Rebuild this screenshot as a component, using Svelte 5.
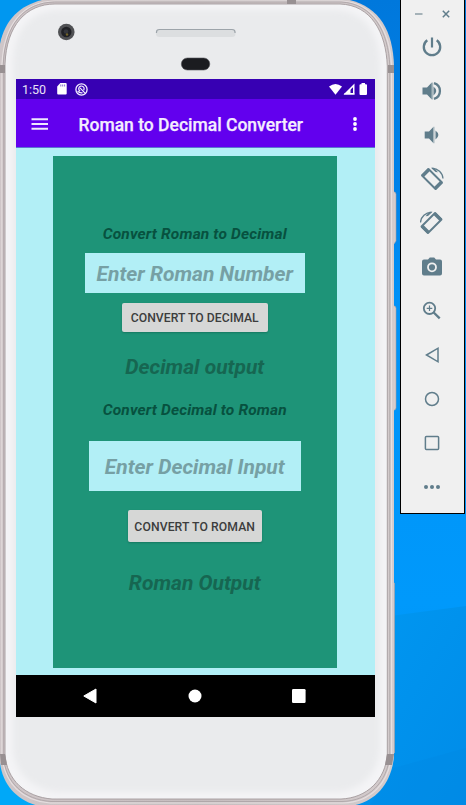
<script>
  const tools = ['power', 'louder', 'quieter', 'rotateLeft', 'rotateRight', 'camera', 'zoom', 'back', 'home', 'overview', 'more'];
</script>

<main class="desktop">
  <svg class="wallpaper" width="466" height="805" viewBox="0 0 466 805" aria-hidden="true">
    <defs>
      <linearGradient id="sky" x1="0" y1="0" x2="0" y2="1">
        <stop offset="0" stop-color="#0078dc" />
        <stop offset=".22" stop-color="#0081e8" />
        <stop offset=".38" stop-color="#0092f8" />
        <stop offset=".75" stop-color="#0099fb" />
        <stop offset="1" stop-color="#008ee9" />
      </linearGradient>
      <linearGradient id="ray" x1="0" y1="0" x2="1" y2="1">
        <stop offset="0" stop-color="#0098f2" />
        <stop offset="1" stop-color="#008ce8" />
      </linearGradient>
      <linearGradient id="metal" x1="0" y1="0" x2="1" y2="0">
        <stop offset="0" stop-color="#cfc6c8" />
        <stop offset=".5" stop-color="#c6bdbf" />
        <stop offset="1" stop-color="#d3cbcc" />
      </linearGradient>
      <filter id="soft" x="-5%" y="-5%" width="110%" height="110%"><feGaussianBlur stdDeviation="3" /></filter>
    </defs>
    <rect width="466" height="805" fill="url(#sky)" />
    <path d="M0 0h60v60H0z" fill="#0097f0" />
    <path d="M0 740h60v65H0z" fill="#00a8f8" />
    <path d="M390 616L466 606V805H340V780z" fill="url(#ray)" />
    <path d="M394 768L466 748V805H370z" fill="#0088e2" opacity=".3" />
    <path d="M393 192h2l1 2v47l-2 3h-1zM393 306h2l1 2v100l-1 2h-2zM393 583h1.500v170H393z" fill="#d6cdce" stroke="#aaa0a3" stroke-width=".6" />
    <path d="M0 44C5 18 23 3 47-1H345C378 5 393 29 394 66V757C391 785 374 803 350 806H39C18 801 3 786 0 763z" fill="url(#metal)" />
    <path d="M2 64C4 24 23 2 54 1H342C374 3 390 31 391.500 66V755C389 783 371 802 343 803H50C23 801 4 784 2 755z" fill="none" stroke="#e6dfe0" stroke-width="1.200" />
    <path d="M3.300 64C5 24.500 24 2.500 54.500 2H341C373 3.500 388.500 32 389.800 66V755C387.500 782 369 801 342 801.500H51C24 799.500 5 783 3.300 755z" fill="none" stroke="#aaa1a3" stroke-width=".8" />
    <path d="M5 64C6.500 25.500 26 4 55 4H340C371 5 386 32 387.300 66V754C385.500 780 367 798 341 799H52C25.500 797 6.500 780 5 754z" fill="#f4f4f6" stroke="#a39a9c" stroke-width=".9" />
    <path d="M13 65C13 30 30 10 60 10H336C366 11 380 36 380 65V750C378 773 361 791 336 792H60C34 791 15 774 13 750z" fill="#eaebed" filter="url(#soft)" />
    <path d="M0 65h5v8H0zM388 65h6v8h-6zM287 0h9v4h-9zM0 754h5l2 11H1zM387 754h7l-2 11h-7z" fill="#989092" />
    <circle cx="66.300" cy="32" r="8.300" fill="#505154" />
    <circle cx="66.300" cy="32" r="5.200" fill="#202125" />
    <circle cx="66" cy="31.500" r="2.300" fill="#34363c" />
    <circle cx="67" cy="34.500" r="1.200" fill="#716228" />
    <rect x="156" y="29" width="79.500" height="8" rx="3.500" fill="#dcdee0" />
    <path d="M156.500 33v-1q0-2.500 3-2.500H232q3 0 3 2.500v1" fill="none" stroke="#9da4aa" stroke-width="1.200" />
    <rect x="181.300" y="58" width="28.500" height="12" rx="6" fill="#1b1c20" stroke="#55565a" stroke-width=".6" />
  </svg>

  <section class="screen">
    <div class="status">
      <span>1:50</span>
      <svg class="sd" width="10" height="12" viewBox="0 0 10 12"><path d="M3.300 0H8.700Q9.700 0 9.700 1V10.600Q9.700 11.600 8.700 11.600H1.200Q.2 11.600 .2 10.600V3.500z" fill="#fff" /><path d="M3.800 1.500v2M5.700 1.500v2M7.600 1.500v2" stroke="#6b4dc4" stroke-width=".8" /></svg>
      <svg class="ring" width="13" height="13" viewBox="0 0 13 13" fill="none" stroke="#f4f0ff"><circle cx="6.500" cy="6.500" r="5.600" stroke-width="1.300" /><path d="M8.600 7.300A2.700 2.700 0 1 0 5.200 8.100" stroke-width="1.200" /><path d="M5 4.800L9.800 9.800M2.600 8.200Q5 10.300 7.500 9.600" stroke-width="1.200" /></svg>
      <svg class="signals" width="40" height="13" viewBox="0 0 40 13" fill="#fff"><path d="M0 3.500Q6.500-1.500 13 3.500L6.500 11.700z" /><path d="M25.500.5V11.500H14.500z" /><path d="M24 4.200V10h-4.800v-1.300z" fill="#3700b3" /><path d="M15 11h10.500" stroke="#fff" /><path d="M18.500 8.200L21.500 5.200V11h-3z" fill="#fff" /><path d="M32.500 1.200V0h3.500v1.200h1q1 0 1 1V11q0 1-1 1h-5.500q-1 0-1-1V2.200q0-1 1-1z" /></svg>
    </div>
    <header>
      <svg width="18" height="12" viewBox="0 0 18 12"><path d="M.5 1.200h16.500M.5 6h16.500M.5 10.700h16.500" stroke="#eee8ff" stroke-width="1.900" /></svg>
      <h1>Roman to Decimal Converter</h1>
      <svg class="dots" width="6" height="16" viewBox="0 0 6 16" fill="#fff"><circle cx="3" cy="3" r="1.900" /><circle cx="3" cy="8" r="1.900" /><circle cx="3" cy="13" r="1.900" /></svg>
    </header>
    <div class="content">
      <div class="card">
        <div class="label first"><span>Convert Roman to Decimal</span></div>
        <div class="field roman"><span>Enter Roman Number</span></div>
        <button class="to-decimal"><span>CONVERT TO DECIMAL</span></button>
        <div class="result"><span>Decimal output</span></div>
        <div class="label second"><span>Convert Decimal to Roman</span></div>
        <div class="field decimal"><span>Enter Decimal Input</span></div>
        <button class="to-roman"><span>CONVERT TO ROMAN</span></button>
        <div class="result last"><span>Roman Output</span></div>
      </div>
    </div>
    <nav>
      <svg width="14" height="16" viewBox="0 0 14 16"><path d="M.8 8L13 1V15z" fill="#fff" stroke="#fff" stroke-linejoin="round" /></svg>
      <svg width="14" height="14" viewBox="0 0 14 14"><circle cx="7" cy="7" r="6.500" fill="#fff" /></svg>
      <svg width="14" height="14" viewBox="0 0 14 14"><rect width="13.600" height="14" rx="1.300" fill="#fff" /></svg>
    </nav>
  </section>

  <aside>
    <div class="window-actions">
      <svg width="8" height="8" viewBox="0 0 8 8"><path d="M0 4h7.500" stroke="#9cabb2" stroke-width="1.800" /></svg>
      <svg width="8" height="8" viewBox="0 0 8 8"><path d="M.8.8L7.200 7.200M7.200.8L.8 7.200" stroke="#607d8b" stroke-width="1.500" /></svg>
    </div>
    {#each tools as tool}
      <div class="tool">
        <svg width="24" height="24" viewBox="0 0 24 24" fill="none" stroke="#607d8b" stroke-width="2">
          {#if tool === 'power'}
            <path d="M12 2.500V12.500" stroke-width="2.200" /><path d="M7.300 5.300A8.200 8.200 0 1 0 16.700 5.300" stroke-width="2.300" />
          {:else if tool === 'louder'}
            <path d="M2.500 8.500h4.500l4.800-5v17l-4.800-5H2.500z" fill="#607d8b" stroke="none" /><path d="M11.800 3.500h1.400v17h-1.400z" fill="#a8b8be" stroke="none" /><path d="M13.500 7.500Q19 12 13.500 16.500z" fill="#607d8b" stroke="none" /><path d="M14 4.200A8.100 8.100 0 0 1 14 19.800" stroke-width="2.300" />
          {:else if tool === 'quieter'}
            <path d="M4.700 8.500h4.300l4.500-4.700v16.400L9 15.500H4.700z" fill="#607d8b" stroke="none" /><path d="M13.500 3.800h1v16.400h-1z" fill="#a8b8be" stroke="none" /><path d="M15.500 7.500Q21.300 12 15.500 16.500z" fill="#607d8b" stroke="none" />
          {:else if tool === 'rotateLeft' || tool === 'rotateRight'}
            <g transform={tool === 'rotateRight' ? 'translate(23.5 0) scale(-1 1)' : ''}>
              <path d="M2 8.500L8.500 2L22 15.500L15.500 22z" stroke-width="1.900" stroke-linejoin="round" />
              <path d="M2.500 9L9 2.500M15 21.500L21.500 15" stroke-width="3.300" />
              <path d="M12 1.300A10.800 10.800 0 0 1 23 11.500" stroke-width="1.300" /><path d="M11 .8L14 .8L18 5.300L15.500 5z" fill="#607d8b" stroke="none" />
            </g>
          {:else if tool === 'camera'}
            <path d="M4 4.500h4L9.800 2.500h4.400L16 4.500h4q2 0 2 2v12q0 2-2 2H4q-2 0-2-2v-12q0-2 2-2z" fill="#607d8b" stroke="none" /><circle cx="12" cy="12.300" r="4" stroke="#f0f0f0" stroke-width="1.800" />
          {:else if tool === 'zoom'}
            <circle cx="9.500" cy="9.300" r="5.700" stroke-width="1.800" /><path d="M9.500 6.500v5.600M6.700 9.300h5.600" stroke-width="1.200" /><path d="M13.700 13.500L19.700 19.300" stroke-width="2.300" />
          {:else if tool === 'back'}
            <path d="M6.500 12L18 5.200V18.800z" stroke-width="1.500" />
          {:else if tool === 'home'}
            <circle cx="12" cy="12" r="6.500" stroke-width="1.500" />
          {:else if tool === 'overview'}
            <rect x="5.400" y="5.400" width="13.200" height="13.200" rx="1" stroke-width="1.500" />
          {:else}
            <g fill="#607d8b" stroke="none"><circle cx="6" cy="12" r="2" /><circle cx="12" cy="12" r="2" /><circle cx="18" cy="12" r="2" /></g>
          {/if}
        </svg>
      </div>
    {/each}
  </aside>
</main>

<style>
  :global(body) { overflow: hidden; }
  .desktop { position: relative; box-sizing: border-box; width: 466px; height: 805px; overflow: hidden; padding-left: 16px; display: flex; align-items: flex-start; font-family: Roboto, sans-serif; }
  .wallpaper { position: absolute; left: 0; top: 0; }
  .screen { position: relative; width: 359px; height: 638px; margin-top: 79px; display: flex; flex-direction: column; flex: none; }
  .status { box-sizing: border-box; height: 20px; background: #3700b3; color: #e9e2f7; display: flex; align-items: center; padding: 0 6px; font-size: 12.500px; }
  .status span { width: 35px; padding-top: 1px; }
  .sd { margin-right: 8px; }
  .signals { margin-left: auto; }
  header { box-sizing: border-box; height: 49px; background: #6200ee; display: flex; align-items: center; padding: 1px 17px 0 15px; border-bottom: 1px solid #5a78ce; }
  h1 { margin: 0 0 0 29.500px; color: #f4edff; font-size: 17.500px; font-weight: 500; white-space: nowrap; padding-top: 2px; -webkit-text-stroke: .25px #f4edff; }
  .dots { margin-left: auto; }
  .content { box-sizing: border-box; height: 527px; background: #b2eff6; padding: 7.500px 38px 0 36.500px; }
  .card { box-sizing: border-box; height: 512px; background: #1e9478; display: flex; flex-direction: column; align-items: center; padding-top: 69px; }
  .label, .field, .result { font-style: italic; font-weight: 700; white-space: nowrap; display: flex; align-items: center; justify-content: center; }
  .label { box-sizing: border-box; height: 20px; padding-bottom: 1px; font-size: 15.500px; letter-spacing: .15px; color: #07513f; }
  .field { font-size: 21px; color: #76a0a4; background: #b2eff6; padding-top: 2px; box-sizing: border-box; }
  .roman { width: 220px; height: 40px; margin-top: 8.500px; }
  .decimal { width: 212px; height: 49.500px; margin-top: 20.500px; }
  button { border: 0; border-radius: 2px; background: #d6d7d6; color: #3c3d3d; font: 500 12.200px Roboto, sans-serif; padding: 1px 0 0; box-shadow: 0 1px 2px #0b503e66; white-space: nowrap; }
  .to-decimal { width: 146px; height: 29px; margin-top: 9.500px; letter-spacing: .04px; }
  .to-roman { width: 134.500px; height: 32px; margin-top: 19.500px; letter-spacing: .1px; }
  .result { height: 26px; margin-top: 22px; font-size: 21px; color: #166651; }
  .second { margin-top: 21px; }
  .last { margin-top: 28px; }
  nav { box-sizing: border-box; height: 42px; background: #000; display: flex; align-items: center; justify-content: space-between; padding: 0 69px 1px 67px; }
  aside { position: relative; box-sizing: border-box; width: 65px; height: 514px; margin-left: 25px; flex: none; background: #f0f0f0; border: 1px solid #000; border-top: 0; display: flex; flex-direction: column; align-items: center; }
  .window-actions { box-sizing: border-box; width: 100%; height: 25px; padding: 10px 14px 0; display: flex; justify-content: space-between; }
  .tool { width: 24px; height: 44px; margin-right: 1px; display: grid; place-items: center; }
</style>
